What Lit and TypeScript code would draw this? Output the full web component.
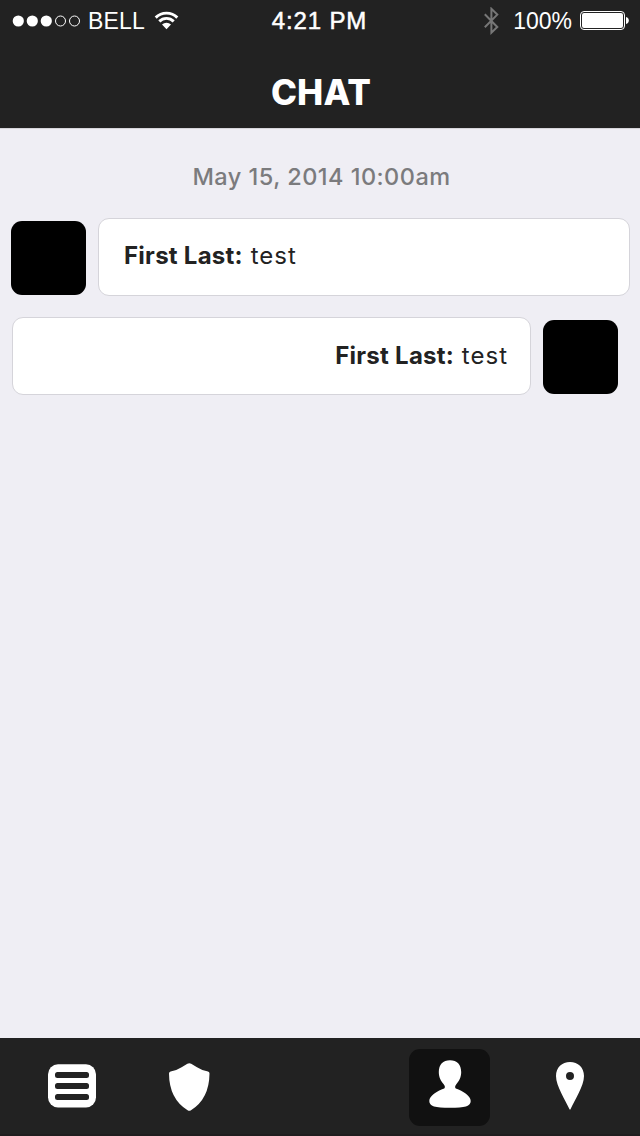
import { LitElement, html, css, svg } from "lit";
import { customElement } from "lit/decorators.js";

@customElement("app-root")
export class AppRoot extends LitElement {
  static styles = css`
    :host { display: flex; flex-direction: column; width: 640px; height: 1136px; background: #efeef4; color: #222; font-family: Inter, "Liberation Sans", sans-serif; overflow: hidden; }
    * { box-sizing: border-box; }
    svg { display: block; flex: none; }
    .top { height: 128px; flex: none; background: #222; color: #fff; }
    .status { height: 41px; display: grid; grid-template-columns: 1fr auto 1fr; align-items: center; padding: 0 11px 0 12px; font: 23px/39px "Liberation Sans", sans-serif; white-space: nowrap; }
    .left, .right { display: flex; align-items: center; }
    .right { justify-content: flex-end; }
    .carrier, .battery-level { padding-top: 2px; line-height: 39px; }
    .carrier { margin-left: 7px; width: 66px; letter-spacing: 0.2px; }
    .time { -webkit-text-stroke: 0.5px #fff; font-size: 24px; line-height: 41px; letter-spacing: 0.85px; padding-right: 2px; }
    .battery-level { margin: 0 8px 0 13px; }
    h1 { margin: 0; padding: 30px 0 0 2px; text-align: center; font-size: 35px; line-height: 43px; font-weight: 800; letter-spacing: 0.1px; }
    main { flex: 1; border-top: 1px solid #d6d5da; }
    .date { margin: 34px 0 0; padding-left: 3px; height: 28px; line-height: 28px; text-align: center; color: #7b7b7d; font-size: 23.5px; font-weight: 500; letter-spacing: 0.47px; }
    .row { display: flex; align-items: center; gap: 12px; height: 78px; padding: 0 10px 0 11px; margin-top: 27px; }
    .row.own { margin-top: 21px; padding: 0 22px 0 12px; }
    .avatar { width: 75px; height: 74px; margin-top: 2px; background: #000; border-radius: 11px; flex: none; }
    .bubble { flex: 1; height: 78px; border: 1px solid #d5d4da; border-radius: 11px; background: #fff; padding: 0 22px 0 25px; font-size: 24px; line-height: 73px; letter-spacing: 1px; white-space: nowrap; }
    .own .bubble { text-align: right; line-height: 76px; }
    .name { font-weight: 700; letter-spacing: 0.26px; }
    nav { height: 98px; flex: none; background: #222; display: grid; grid-template-columns: 48px 73px 41px 199px 81px 66px 28px; justify-content: start; padding: 11px 0 0 48px; border-bottom: 2px solid #1f1d1e; }
    .tab { display: flex; height: 77px; }
    .menu { padding-top: 15px; }
    .shield { grid-column: 3; padding-top: 14px; }
    .active { grid-column: 5; background: #111; border-radius: 11px; justify-content: center; padding-top: 11px; }
    .pin { grid-column: 7; padding-top: 13px; }
  `;

  private signal() {
    return html`<svg width="69" height="14" viewBox="0 0 69 14">
      ${[6.3, 20.3, 34.3].map((x) => svg`<circle cx=${x} cy="7" r="5.6" fill="#fff"></circle>`)}
      ${[48.5, 62.5].map((x) => svg`<circle cx=${x} cy="7" r="5" fill="none" stroke="#fff" stroke-width="1"></circle>`)}
    </svg>`;
  }

  render() {
    return html`
      <header class="top">
        <div class="status">
          <div class="left">
            ${this.signal()}
            <span class="carrier">BELL</span>
            <svg width="25" height="21" viewBox="0 0 25 21">
              <g fill="none" stroke="#fff" stroke-width="2.9">
                <path d="M1.7 7.6A15.3 15.3 0 0 1 23.3 7.6"></path>
                <path d="M5.3 11.4A10.2 10.2 0 0 1 19.7 11.4"></path>
              </g>
              <path fill="#fff" d="M8 14.6A6.4 6.4 0 0 1 17 14.6L12.5 19.2Z"></path>
            </svg>
          </div>
          <span class="time">4:21 PM</span>
          <div class="right">
            <svg width="16" height="28" viewBox="0 0 16 28">
              <path d="M.8 7.3L13.3 20L7.4 25.7V1.8L13.3 7.6L.8 20.3" fill="none" stroke="#777" stroke-width="2"></path>
            </svg>
            <span class="battery-level">100%</span>
            <svg width="49" height="20" viewBox="0 0 49 20">
              <rect x=".5" y=".5" width="44" height="18" rx="3.5" fill="none" stroke="#fff"></rect>
              <rect x="2" y="2" width="41" height="15" rx="2" fill="#fff"></rect>
              <path d="M46 6Q48.8 6.7 48.8 9.5T46 13Z" fill="#fff"></path>
            </svg>
          </div>
        </div>
        <h1>CHAT</h1>
      </header>
      <main>
        <p class="date">May 15, 2014 10:00am</p>
        <div class="row">
          <div class="avatar"></div>
          <div class="bubble"><span class="name">First Last:</span> test</div>
        </div>
        <div class="row own">
          <div class="bubble"><span class="name">First Last:</span> test</div>
          <div class="avatar"></div>
        </div>
      </main>
      <nav>
        <div class="tab menu">
          <svg width="48" height="44" viewBox="0 0 48 44">
            <rect y=".3" width="48" height="43.2" rx="10" fill="#fff"></rect>
            <g fill="#222">
              <rect x="7" y="8" width="34" height="6" rx="2.5"></rect>
              <rect x="7" y="19" width="34" height="6" rx="2.5"></rect>
              <rect x="7" y="30" width="34" height="6" rx="2.5"></rect>
            </g>
          </svg>
        </div>
        <div class="tab shield">
          <svg width="41" height="49" viewBox="0 0 41 49">
            <path fill="#fff" d="M18.4.8Q20.3-.3 22.2.8L28 4.3Q33.8 8 39 8.5Q40.5 8.8 40.5 10.5Q40.2 36 22 47.2Q20.2 48.5 18.6 47.2Q.2 36 0 10.5Q0 8.8 1.6 8.5Q6.8 8 12.6 4.3Z"></path>
          </svg>
        </div>
        <div class="tab active">
          <svg width="42" height="49" viewBox="0 0 42 49">
            <path fill="#fff" d="M21 .2C28 .2 32.2 4.5 32.2 12C32.2 17.5 30 21 27.3 24.2C26 25.8 25.7 27.5 26.8 28.4C34 31 41.7 35.5 41.7 41C41.7 46.3 36 47.8 21 47.8C6 47.8 .3 46.3 .3 41C.3 35.5 8 31 15.2 28.4C16.3 27.5 16 25.8 14.7 24.2C12 21 9.8 17.5 9.8 12C9.8 4.5 14 .2 21 .2Z"></path>
          </svg>
        </div>
        <div class="tab pin">
          <svg width="28" height="48" viewBox="0 0 28 48">
            <path fill="#fff" fill-rule="evenodd" d="M14 0C22 0 28 5.5 28 14C28 24 18.5 38.5 14.5 47.3Q14 48.2 13.5 47.3C9.5 38.5 0 24 0 14C0 5.5 6 0 14 0ZM14 10A4 4 0 1 0 14 18A4 4 0 1 0 14 10Z"></path>
          </svg>
        </div>
      </nav>
    `;
  }
}
